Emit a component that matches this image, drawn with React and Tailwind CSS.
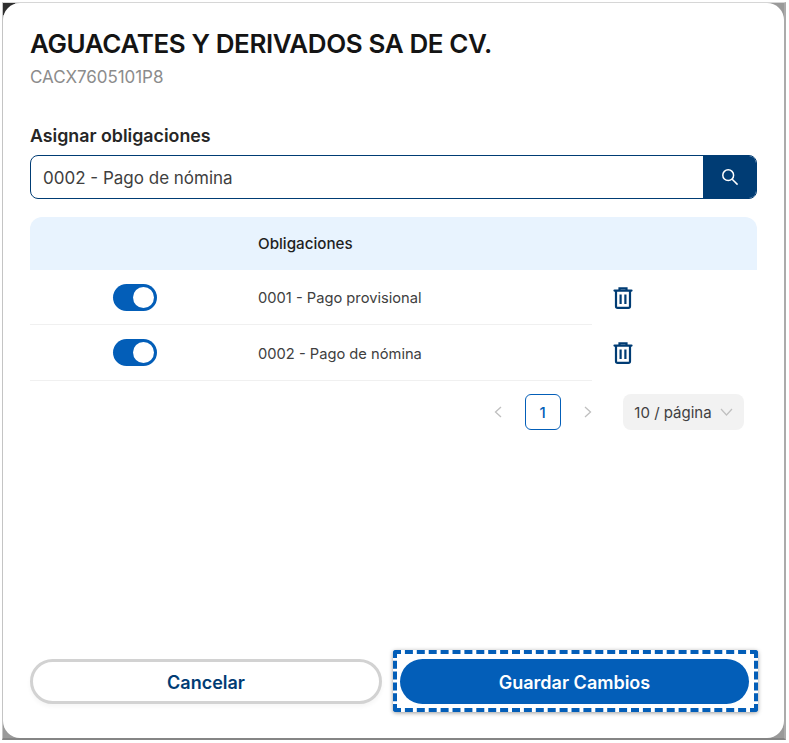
import React from "react";

const Toggle = () => (
  <div className="flex h-[27px] w-[44px] items-center justify-end rounded-full bg-[#035eb8] pr-[3px]">
    <div className="h-[21px] w-[21px] rounded-full bg-white" />
  </div>
);

const Trash = () => (
  <svg width="20" height="22" viewBox="0 0 20 22" fill="none" stroke="#003c74" strokeWidth="2.2">
    <path d="M1.5 3.6h17" strokeLinecap="round" />
    <path d="M6.5 3V1.4h7V3" />
    <path d="M3 4v15.2c0 .9.7 1.6 1.6 1.6h10.8c.9 0 1.6-.7 1.6-1.6V4" />
    <path d="M7.6 7.5v9.5M12.4 7.5v9.5" />
  </svg>
);

const Row = ({ label, tall }) => (
  <div className={tall ? "flex h-[56px] w-[562px] items-center border-b border-[#f0f0f0]" : "flex h-[55px] w-[562px] items-center border-b border-[#f0f0f0]"}>
    <div className="flex w-[210px] justify-center">
      <Toggle />
    </div>
    <div className="pl-[18px] pt-[3px] text-[14.7px] text-[#404040]">{label}</div>
  </div>
);

export default function App() {
  return (
    <div className="h-[743px] w-[789px] overflow-hidden bg-white pl-[2px] pt-[2px] font-['Inter',sans-serif]">
      <div className="relative h-[738px] w-[784px] border-b-[2px] border-l-[1px] border-r-[2px] border-t-[1px] border-b-[#858585] border-l-[#c4c4c4] border-r-[#ababab] border-t-[#d6d6d6] bg-[#9a9a9a]">
        <div className="absolute left-0 top-0 h-[12px] w-[12px] bg-[#2e2e2e]" />
        <div className="relative flex h-full w-full flex-col rounded-[17px] bg-white px-[27px] pb-[26px] pt-[23px]">
          <h1 className="text-[26px] font-semibold leading-[36px] tracking-[-0.4px] text-[#141414]">
            AGUACATES Y DERIVADOS SA DE CV.
          </h1>
          <p className="mt-[3px] text-[17px] leading-[24px] tracking-[-0.05px] text-[#8c8c8c]">CACX7605101P8</p>

          <label className="mt-[35px] text-[17.8px] font-semibold leading-[24px] text-[#262626]">
            Asignar obligaciones
          </label>
          <div className="mt-[7px] flex h-[44px] w-[727px] overflow-hidden rounded-[8px] border border-[#003c74]">
            <div className="flex flex-1 items-center pl-[12px] pt-[3px] text-[17px] text-[#404040]">
              0002 - Pago de nómina
            </div>
            <div className="flex w-[53px] items-center justify-center bg-[#003c74]">
              <svg width="18" height="18" viewBox="0 0 18 18" fill="none" stroke="white" strokeWidth="1.5">
                <circle cx="7.2" cy="7.2" r="5.4" />
                <path d="M11.2 11.2l5.4 5.4" />
              </svg>
            </div>
          </div>

          <div className="relative mt-[18px] w-[727px]">
            <div className="flex h-[53px] items-center rounded-t-[12px] bg-[#e8f3fe] pl-[228px] pt-[2px] text-[15.2px] font-medium text-[#1f1f1f]">
              Obligaciones
            </div>
            <Row label="0001 - Pago provisional" />
            <Row label="0002 - Pago de nómina" tall />
            <div className="absolute left-[583px] top-[70px]">
              <Trash />
            </div>
            <div className="absolute left-[583px] top-[125px]">
              <Trash />
            </div>
          </div>

          <div className="mt-[13px] flex w-[714px] items-center justify-end">
            <svg width="10" height="12" viewBox="0 0 10 12" fill="none" stroke="#bfbfbf" strokeWidth="1.3">
              <path d="M8 1L2.5 6 8 11" />
            </svg>
            <div className="ml-[22px] flex h-[36px] w-[36px] items-center justify-center rounded-[6px] border border-[#035eb8] pr-[1px] pt-[2px] text-[15px] font-medium text-[#035eb8]">
              1
            </div>
            <svg className="ml-[22px]" width="10" height="12" viewBox="0 0 10 12" fill="none" stroke="#bfbfbf" strokeWidth="1.3">
              <path d="M2 1l5.5 5L2 11" />
            </svg>
            <div className="ml-[30px] flex h-[36px] w-[121px] items-center justify-center gap-[8px] rounded-[8px] bg-[#f2f2f2] text-[15px] text-[#404040]">
              <span className="pt-[2px]">10 / página</span>
              <svg width="13" height="8" viewBox="0 0 13 8" fill="none" stroke="#bfbfbf" strokeWidth="1.2">
                <path d="M1 1l5.5 6L12 1" />
              </svg>
            </div>
          </div>

          <div className="mt-auto flex items-center justify-between">
            <button className="mt-[1px] flex h-[45px] w-[352px] items-center justify-center rounded-full border-[3px] border-[#d2d2d2] bg-white pt-[1px] text-[18px] font-semibold text-[#003c74] shadow-[0_3px_4px_rgba(0,0,0,0.04)]">
              Cancelar
            </button>
            <div className="mr-[-1px] rounded-[3px] border-[4px] border-dashed border-[#035eb8] pb-[4px] pl-[3px] pr-[5px] pt-[5px] shadow-[0_1px_4px_rgba(0,0,0,0.4)]">
              <button className="flex h-[45px] w-[349px] items-center justify-center rounded-full bg-[#035eb8] pt-[1px] text-[18px] font-semibold text-white">
                Guardar Cambios
              </button>
            </div>
          </div>
        </div>
      </div>
    </div>
  );
}
